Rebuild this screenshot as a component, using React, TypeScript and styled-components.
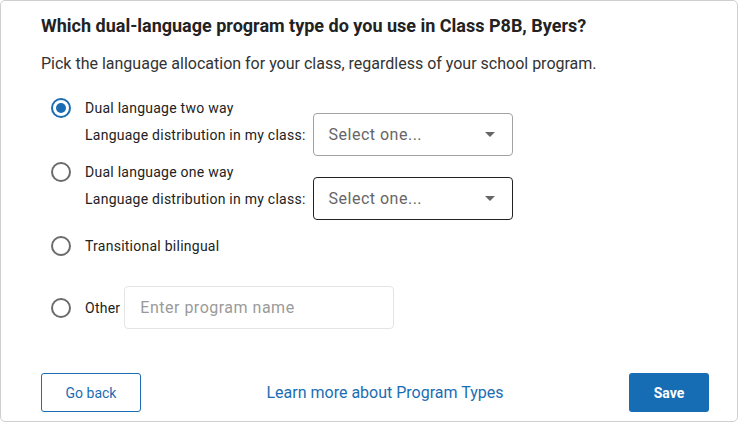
import React, { useState } from 'react'
import styled, { createGlobalStyle } from 'styled-components'

const GlobalStyle = createGlobalStyle`
  html, body {
    margin: 0;
    padding: 0;
    background: #ffffff;
  }
  body {
    font-family: Roboto, 'Liberation Sans', Arial, sans-serif;
    color: #222222;
  }
  * {
    box-sizing: border-box;
  }
`

const Card = styled.div`
  width: 738px;
  height: 422px;
  border: 1px solid #cfcfcf;
  border-radius: 5px;
  padding: 15px 28px 9px 40px;
  display: flex;
  flex-direction: column;
  background: #fff;
`

const Title = styled.h2`
  margin: 0;
  font-size: 18px;
  line-height: 20px;
  font-weight: 700;
  color: #222;
`

const Subtitle = styled.p`
  margin: 18px 0 0;
  font-size: 16px;
  line-height: 20px;
  color: #333;
`

const OptionList = styled.div`
  display: flex;
  flex-direction: column;
  margin-top: 24px;
  padding-left: 10px;
`

const Option = styled.div<{ $mt?: number }>`
  display: grid;
  grid-template-columns: 20px 1fr;
  column-gap: 14px;
  margin-top: ${(p) => p.$mt ?? 0}px;
`

const RadioCircle = styled.span<{ $checked?: boolean }>`
  width: 20px;
  height: 20px;
  border-radius: 50%;
  border: 2px solid ${(p) => (p.$checked ? '#1a6db3' : '#6b6b6b')};
  display: flex;
  align-items: center;
  justify-content: center;
  align-self: center;
  cursor: pointer;

  &::after {
    content: '';
    width: 10px;
    height: 10px;
    border-radius: 50%;
    background: ${(p) => (p.$checked ? '#1a6db3' : 'transparent')};
  }
`

const RadioCell = styled.div`
  display: flex;
  align-items: center;
  height: 20px;
`

const OptionLabel = styled.span`
  font-size: 14px;
  line-height: 20px;
  letter-spacing: 0.25px;
  color: #222;
  display: flex;
  align-items: center;
`

const Body = styled.div`
  display: flex;
  flex-direction: column;
`

const SubRow = styled.div`
  display: flex;
  align-items: center;
  gap: 7px;
  margin-top: -5px;
`

const SubLabel = styled.span`
  font-size: 14px;
  letter-spacing: 0.25px;
  color: #222;
`

const SelectBox = styled.div<{ $active?: boolean }>`
  width: 200px;
  height: 43px;
  border: 1px solid ${(p) => (p.$active ? '#222' : '#a3a3a3')};
  border-radius: 4px;
  display: flex;
  align-items: center;
  justify-content: space-between;
  padding: 0 17px 0 15px;
  font-size: 16px;
  letter-spacing: 0.5px;
  color: #666;
  cursor: pointer;
`

const Caret = styled.span`
  width: 0;
  height: 0;
  border-left: 5px solid transparent;
  border-right: 5px solid transparent;
  border-top: 5px solid #666;
`

const InlineRow = styled.div`
  display: flex;
  align-items: center;
  gap: 4px;
`

const TextInput = styled.input`
  width: 270px;
  height: 43px;
  border: 1px solid #e4e4e4;
  border-radius: 4px;
  padding: 0 15px;
  font-family: inherit;
  font-size: 16px;
  letter-spacing: 0.5px;
  color: #222;
  outline: none;

  &::placeholder {
    color: #9a9a9a;
  }
`

const OtherGrid = styled(Option)`
  align-items: center;
`

const Footer = styled.div`
  margin-top: auto;
  display: flex;
  align-items: center;
  justify-content: space-between;
`

const OutlineButton = styled.button`
  width: 100px;
  height: 39px;
  border: 1px solid #1a6db3;
  border-radius: 3px;
  background: #fff;
  color: #1a6db3;
  font-family: inherit;
  font-size: 14px;
  cursor: pointer;
`

const LinkText = styled.a`
  font-size: 16px;
  color: #1a6db3;
  text-decoration: none;
  cursor: pointer;
`

const PrimaryButton = styled.button`
  width: 80px;
  height: 39px;
  border: none;
  border-radius: 3px;
  background: #176db4;
  color: #fff;
  font-family: inherit;
  font-size: 14px;
  font-weight: 700;
  cursor: pointer;
`

const options = [
  { id: 'two', label: 'Dual language two way', select: true, mt: 0 },
  { id: 'one', label: 'Dual language one way', select: true, mt: 6 },
  { id: 'trans', label: 'Transitional bilingual', select: false, mt: 16 },
]

const App = () => {
  const [selected, setSelected] = useState('two')

  return (
    <>
      <GlobalStyle />
      <Card>
        <Title>Which dual-language program type do you use in Class P8B, Byers?</Title>
        <Subtitle>Pick the language allocation for your class, regardless of your school program.</Subtitle>

        <OptionList>
          {options.map((o) => (
            <Option key={o.id} $mt={o.mt}>
              <RadioCell>
                <RadioCircle $checked={selected === o.id} onClick={() => setSelected(o.id)} />
              </RadioCell>
              <Body>
                <OptionLabel>{o.label}</OptionLabel>
                {o.select && (
                  <SubRow>
                    <SubLabel>Language distribution in my class:</SubLabel>
                    <SelectBox $active={o.id === 'one'}>
                      Select one...
                      <Caret />
                    </SelectBox>
                  </SubRow>
                )}
              </Body>
            </Option>
          ))}

          <OtherGrid $mt={30}>
            <RadioCell>
              <RadioCircle $checked={selected === 'other'} onClick={() => setSelected('other')} />
            </RadioCell>
            <InlineRow>
              <OptionLabel>Other</OptionLabel>
              <TextInput placeholder="Enter program name" />
            </InlineRow>
          </OtherGrid>
        </OptionList>

        <Footer>
          <OutlineButton>Go back</OutlineButton>
          <LinkText>Learn more about Program Types</LinkText>
          <PrimaryButton>Save</PrimaryButton>
        </Footer>
      </Card>
    </>
  )
}

export default App
